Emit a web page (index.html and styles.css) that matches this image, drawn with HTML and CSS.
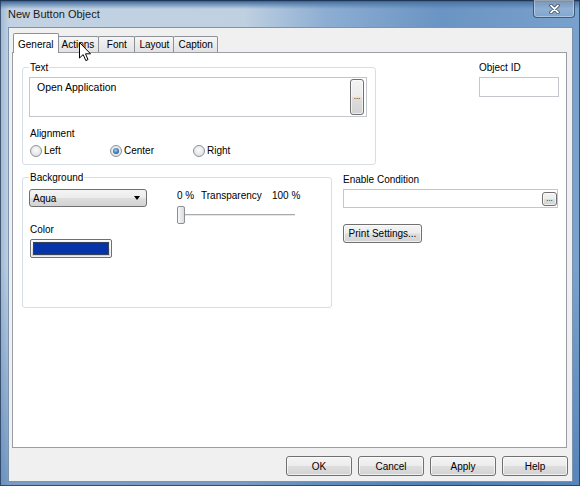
FILE: index.html
```html
<!DOCTYPE html>
<html lang="en">
<head>
    <meta charset="UTF-8"/>
    <title>New Button Object</title>
    <link rel="stylesheet" href="styles.css">
</head>
<body>
<div class="window">
    <div class="titlebar">
        <span class="title">New Button Object</span>
        <div class="close-button">
            <svg width="11" height="10" viewBox="0 0 11 10">
                <path d="M2 1.5 L9 8.5 M9 1.5 L2 8.5" stroke="#2d3f55" stroke-width="3.2" stroke-linecap="round"/>
                <path d="M2 1.5 L9 8.5 M9 1.5 L2 8.5" stroke="#ffffff" stroke-width="1.8" stroke-linecap="round"/>
            </svg>
        </div>
    </div>

    <div class="client">
        <div class="tabs">
            <div class="tab active">General</div>
            <div class="tab">Actions</div>
            <div class="tab">Font</div>
            <div class="tab">Layout</div>
            <div class="tab">Caption</div>

            <!-- mouse pointer resting on the Actions tab -->
            <svg class="pointer" width="13" height="20" viewBox="0 0 13 20">
                <path d="M0.5 0.5 L0.5 16 L4.2 12.6 L6.8 18.6 L9 17.6 L6.5 11.8 L11.5 11.8 Z"
                      fill="#ffffff" stroke="#000000" stroke-width="1" stroke-linejoin="round"/>
            </svg>
        </div>

        <div class="tab-page">
            <div class="row">
                <fieldset class="group text-group">
                    <legend>Text</legend>
                    <div class="textbox multiline">
                        <span class="textbox-value">Open Application</span>
                        <button class="btn dots-tall">...</button>
                    </div>
                    <div class="field-label alignment-label">Alignment</div>
                    <div class="radios">
                        <label class="radio"><span class="radio-dot"></span>Left</label>
                        <label class="radio"><span class="radio-dot checked"></span>Center</label>
                        <label class="radio"><span class="radio-dot"></span>Right</label>
                    </div>
                </fieldset>

                <div class="object-id">
                    <div class="field-label">Object ID</div>
                    <div class="textbox single"></div>
                </div>
            </div>

            <div class="row row-lower">
                <fieldset class="group bg-group">
                    <legend>Background</legend>
                    <div class="bg-body">
                        <div class="bg-left">
                            <div class="combo">
                                <span>Aqua</span>
                                <span class="combo-arrow"></span>
                            </div>
                            <div class="field-label color-label">Color</div>
                            <button class="btn swatch"><span class="swatch-fill"></span></button>
                        </div>
                        <div class="bg-right">
                            <div class="slider-labels">
                                <span>0 %</span>
                                <span>Transparency</span>
                                <span>100 %</span>
                            </div>
                            <div class="slider">
                                <span class="slider-thumb"></span>
                            </div>
                        </div>
                    </div>
                </fieldset>

                <div class="side">
                    <div class="field-label">Enable Condition</div>
                    <div class="textbox condition">
                        <button class="btn dots-small">...</button>
                    </div>
                    <button class="btn print-button">Print Settings...</button>
                </div>
            </div>
        </div>

        <div class="dialog-buttons">
            <button class="btn dialog-button">OK</button>
            <button class="btn dialog-button">Cancel</button>
            <button class="btn dialog-button">Apply</button>
            <button class="btn dialog-button">Help</button>
        </div>
    </div>
</div>
</body>
</html>
```

FILE: styles.css
```css
/* Base */
html, body {
    margin: 0;
    padding: 0;
}

body {
    font-family: "Liberation Sans", Arial, sans-serif;
    font-size: 10px;
    line-height: 13px;
    color: #000000;
}

/* Aero glass frame */
.window {
    width: 580px;
    height: 486px;
    box-sizing: border-box;
    display: flex;
    flex-direction: column;
    position: relative;
    overflow: hidden;
    background:
        linear-gradient(180deg, #223e5e 0, #4d76a4 2px, rgba(80, 120, 165, 0) 9px),
        linear-gradient(180deg, rgba(0, 0, 0, 0) 55%, rgba(60, 110, 170, 0.55) 100%),
        linear-gradient(90deg, #9db7d3 0, #c2d2e2 9px, #bfd0e1 42%, #8daed2 56%, #6a94c3 76%, #79a1cd 100%);
    box-shadow: inset 0 0 0 1px rgba(25, 45, 75, 0.7);
}

.titlebar {
    height: 27px;
    flex: none;
    display: flex;
    align-items: flex-start;
    padding: 0 5px 0 8px;
}

.title {
    font-size: 11px;
    line-height: 14px;
    margin-top: 7px;
    color: #1a1a1a;
}

.close-button {
    margin-left: auto;
    width: 42px;
    height: 18px;
    box-sizing: border-box;
    display: flex;
    align-items: center;
    justify-content: center;
    border: 1px solid rgba(35, 60, 95, 0.75);
    border-top: none;
    border-radius: 0 0 4px 4px;
    background: linear-gradient(rgba(255, 255, 255, 0.3), rgba(255, 255, 255, 0.08));
    box-shadow: inset 0 0 0 1px rgba(255, 255, 255, 0.35);
}

/* Dialog client area */
.client {
    flex: 1;
    margin: 0 7px 4px 8px;
    box-sizing: border-box;
    display: flex;
    flex-direction: column;
    padding: 5px 5px 5px 3px;
    background: #f0f0f0;
    border: 1px solid #7c93ae;
}

/* Tab strip */
.tabs {
    height: 19px;
    flex: none;
    display: flex;
    align-items: flex-end;
    padding-left: 3px;
    position: relative;
    z-index: 1;
}

.tab {
    height: 16px;
    min-width: 37px;
    box-sizing: border-box;
    padding: 1px 4px 0;
    margin-left: -1px;
    text-align: center;
    border: 1px solid #8e9197;
    border-bottom: none;
    border-radius: 2px 2px 0 0;
    background: linear-gradient(#f6f6f6, #ebebeb 50%, #e2e2e2);
}

.tab.active {
    height: 20px;
    padding-top: 4px;
    margin: 0 -1px -1px -2px;
    background: #ffffff;
    position: relative;
}

.pointer {
    position: absolute;
    left: 67px;
    top: 9px;
}

/* Tab page */
.tab-page {
    flex: 1;
    box-sizing: border-box;
    padding: 8px 7px 0 9px;
    background: #ffffff;
    border: 1px solid #9a9da3;
}

.row {
    display: flex;
    align-items: flex-start;
}

.row-lower {
    margin-top: 6px;
}

/* Group boxes */
.group {
    margin: 0;
    min-width: 0;
    box-sizing: border-box;
    padding: 3px 8px 5px 6px;
    border: 1px solid #d5dfe5;
    border-radius: 3px;
}

.group legend {
    padding: 0 1px;
    line-height: 13px;
}

.text-group {
    width: 354px;
    padding-bottom: 7px;
}

.bg-group {
    width: 310px;
    padding-top: 5px;
    padding-bottom: 49px;
}

.field-label {
    line-height: 13px;
    white-space: nowrap;
}

/* Text inputs */
.textbox {
    box-sizing: border-box;
    background: #ffffff;
    border: 1px solid #c3c6cb;
}

.textbox.multiline {
    height: 40px;
    display: flex;
    justify-content: space-between;
    align-items: stretch;
    padding: 1px 2px 1px 7px;
}

.textbox-value {
    margin-top: 2px;
    font-size: 10.5px;
}

.textbox.single {
    height: 20px;
    margin-top: 3px;
}

.textbox.condition {
    height: 19px;
    margin-top: 3px;
    display: flex;
    justify-content: flex-end;
    align-items: center;
    padding-top: 1px;
}

/* Push buttons */
.btn {
    font: inherit;
    color: #000000;
    padding: 0;
    box-sizing: border-box;
    border: 1px solid #707070;
    border-radius: 3px;
    background: linear-gradient(#f4f4f4 0%, #ececec 48%, #dedede 52%, #d2d2d2 100%);
    box-shadow: inset 0 0 0 1px rgba(255, 255, 255, 0.65);
    text-align: center;
    white-space: nowrap;
}

.dots-tall {
    width: 14px;
    font-size: 8px;
    line-height: 8px;
}

.dots-small {
    width: 15px;
    height: 14px;
    font-size: 8px;
    line-height: 8px;
}

.alignment-label {
    margin-top: 10px;
    padding-left: 1px;
}

.radios {
    margin-top: 4px;
    display: grid;
    grid-template-columns: 80px 83px auto;
    padding-left: 1px;
}

.radio {
    display: flex;
    align-items: center;
    gap: 2px;
}

.radio-dot {
    width: 12px;
    height: 12px;
    box-sizing: border-box;
    border-radius: 50%;
    border: 1px solid #8f9193;
    background: radial-gradient(circle at 50% 40%, #fbfbfb, #d7d9db);
    display: flex;
    align-items: center;
    justify-content: center;
}

.radio-dot.checked::after {
    content: "";
    width: 6px;
    height: 6px;
    border-radius: 50%;
    background: radial-gradient(circle at 45% 40%, #9fd0f5, #1f5fa4 70%);
}

/* Object ID column */
.object-id {
    width: 80px;
    margin-left: auto;
}

/* Background group content */
.bg-body {
    display: flex;
    gap: 30px;
}

.bg-left,
.bg-right {
    width: 118px;
}

.combo {
    height: 18px;
    box-sizing: border-box;
    display: flex;
    align-items: center;
    justify-content: space-between;
    padding: 0 3px 0 3px;
    border: 1px solid #707070;
    border-radius: 3px;
    background: linear-gradient(#f4f4f4 0%, #ececec 48%, #dedede 52%, #d2d2d2 100%);
}

.combo-arrow {
    width: 0;
    height: 0;
    margin-right: 3px;
    border-left: 3.5px solid transparent;
    border-right: 3.5px solid transparent;
    border-top: 4px solid #000000;
}

.color-label {
    margin-top: 16px;
    padding-left: 1px;
}

.swatch {
    display: block;
    width: 82px;
    height: 19px;
    margin: 3px 0 0 1px;
    padding: 2px;
    border-radius: 2px;
}

.swatch-fill {
    display: block;
    height: 100%;
    background: #0634a8;
    border: 1px solid #33415a;
    box-sizing: border-box;
}

.slider-labels {
    display: grid;
    grid-template-columns: 24px 71px auto;
    white-space: nowrap;
}

.slider {
    height: 18px;
    margin-top: 4px;
    background:
        linear-gradient(#a9abae, #a9abae) 0 8px / 100% 1px no-repeat,
        linear-gradient(#e6e6e6, #e6e6e6) 0 9px / 100% 1px no-repeat;
}

.slider-thumb {
    display: block;
    width: 8px;
    height: 18px;
    box-sizing: border-box;
    border: 1px solid #8c8f93;
    border-radius: 2px;
    background: linear-gradient(90deg, #f7f7f7, #dcdcdc);
}

/* Right side column */
.side {
    width: 215px;
    margin: 2px 0 0 11px;
}

.print-button {
    display: block;
    width: 79px;
    height: 19px;
    margin-top: 16px;
}

/* OK / Cancel / Apply / Help */
.dialog-buttons {
    flex: none;
    display: flex;
    justify-content: flex-end;
    gap: 6px;
    margin: 8px -1px 0 0;
}

.dialog-button {
    width: 66px;
    height: 20px;
}
```
